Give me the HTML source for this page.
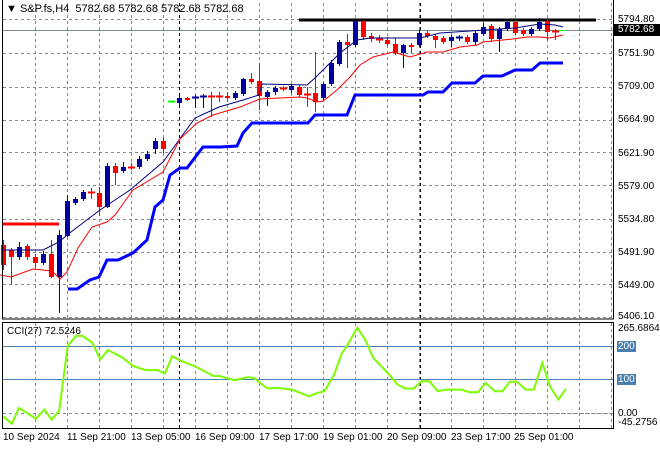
<!DOCTYPE html>
<html><head><meta charset="utf-8"><style>
body{margin:0;background:#fff;width:660px;height:450px;overflow:hidden;font-family:"Liberation Sans",sans-serif;}
svg{position:absolute;left:0;top:0}
.t{position:absolute;font-size:10px;color:#000;white-space:nowrap;line-height:11px}
</style></head><body>
<svg id="s" width="660" height="450" xmlns="http://www.w3.org/2000/svg"></svg>
<div class="t" style="left:6px;top:4px;font-size:11px">&#9660; S&amp;P.fs,H4&nbsp; 5782.68 5782.68 5782.68 5782.68</div>
<div class="t" style="left:618px;top:14px">5794.80</div>
<div class="t" style="left:613px;top:24px;background:#000;color:#fff;width:47px;padding-left:5px;height:12px">5782.68</div>
<div class="t" style="left:618px;top:48px">5751.90</div>
<div class="t" style="left:618px;top:81px">5709.00</div>
<div class="t" style="left:618px;top:114px">5664.90</div>
<div class="t" style="left:618px;top:148px">5621.90</div>
<div class="t" style="left:618px;top:181px">5579.00</div>
<div class="t" style="left:618px;top:214px">5534.80</div>
<div class="t" style="left:618px;top:247px">5491.90</div>
<div class="t" style="left:618px;top:280px">5449.00</div>
<div class="t" style="left:618px;top:311px">5406.10</div>
<div class="t" style="left:7px;top:326px">CCI(27) 72.5246</div>
<div class="t" style="left:618px;top:323px">265.6864</div>
<div class="t" style="left:617px;top:341px;background:#4a7fae;color:#fff;padding:0 1px">200</div>
<div class="t" style="left:617px;top:374px;background:#4a7fae;color:#fff;padding:0 1px">100</div>
<div class="t" style="left:618px;top:408px">0.00</div>
<div class="t" style="left:618px;top:417px">-45.2756</div>
<div class="t" style="left:3px;top:432px">10 Sep 2024</div>
<div class="t" style="left:67px;top:432px">11 Sep 21:00</div>
<div class="t" style="left:131px;top:432px">13 Sep 05:00</div>
<div class="t" style="left:195px;top:432px">16 Sep 09:00</div>
<div class="t" style="left:259px;top:432px">17 Sep 17:00</div>
<div class="t" style="left:323px;top:432px">19 Sep 01:00</div>
<div class="t" style="left:387px;top:432px">20 Sep 09:00</div>
<div class="t" style="left:451px;top:432px">23 Sep 17:00</div>
<div class="t" style="left:514px;top:432px">25 Sep 01:00</div>
<script>
var s=document.getElementById('s'),h='';
function L(x1,y1,x2,y2,c,w,d){h+='<line x1="'+x1+'" y1="'+y1+'" x2="'+x2+'" y2="'+y2+'" stroke="'+c+'" stroke-width="'+(w||1)+'"'+(d?' stroke-dasharray="'+d+'"':'')+'/>';}
function P(pts,c,w){h+='<polyline fill="none" stroke="'+c+'" stroke-width="'+w+'" points="'+pts.map(p=>p.join(',')).join(' ')+'"/>';}
var G='#7d8a95';
[19,53,87,120,152,185,219,252,284,317].forEach(y=>L(3,y+.5,614,y+.5,G,1,'3,3'));
for(var x=35;x<614;x+=32){L(x+.5,3,x+.5,319,G,1,'3,3');L(x+.5,323,x+.5,428,G,1,'3,3');}
L(413,413.5,614,413.5,G,1,'3,3');L(3,413.5,614,413.5,G,1,'3,3');
L(179.5,3,179.5,319,'#000',1,'3,3');L(179.5,323,179.5,428,'#000',1,'3,3');
L(420.5,3,420.5,319,'#000',1,'3,3');L(420.5,323,420.5,428,'#000',1,'3,3');
L(3,30.5,614,30.5,'#7d8a95',1);
L(299,20,596,20,'#000',3);
L(3,224,59,224,'#f00',3);
var C=[[245,265,240,270],[250,257,248,285],[257,247,242,260],[246,257,244,260],[257,263,254,268],[263,254,251,265],[254,277,240,278],[277,235,230,313],[236,201,195,237],[203,199,197,205],[199,192,190,201],[192,193,188,199],[193,207,187,216],[207,166,163,208],[166,173,163,185],[171,167,162,173],[167,167,163,170],[167,159,156,169],[159,154,151,161],[149,141,138,154],[141,149,138,153],
[101,101,101,101],[103,98,96,107],[98,100,97,101],[98,97,95,108],[97,96,94,108],[96,97,92,117],[96,97,92,102],[96,98,92,102],[98,93,91,100],[94,79,78,96],[79,82,73,84],[81,96,63,110],[97,92,90,106],[92,88,86,95],[88,89,86,91],[90,86,84,93],[87,95,85,97],[94,94,87,107],[93,102,52,112],[98,84,82,100],[84,63,60,86],[64,42,40,66],[42,45,34,68],[45,21,20,47],[21,37,20,40],[36,39,33,42],[39,40,35,43],[40,44,37,46],[44,53,38,55],[53,45,44,68],[45,47,43,53],[45,33,30,47],[33,36,31,38],[36,40,34,48],[38,42,36,44],[41,37,35,47],[38,37,35,41],[37,42,35,44],[42,33,31,45],[34,27,23,36],[26,39,24,41],[39,29,27,52],[29,22,19,31],[22,33,20,35],[30,34,28,36],[34,29,27,36],[29,22,18,31],[21,32,18,40],[31,31,29,40]];
C.forEach((c,i)=>{var x=3+8*i,o=c[0],cl=c[1],col=cl<o?'#0000a0':'#f00';if(i==21)col='#0f0';
L(x+.5,c[2],x+.5,c[3],col,1);var t=Math.min(o,cl),b=Math.max(o,cl);
if(b-t<2){L(x-3,t+.5,x+4,t+.5,col,2);}else h+='<rect x="'+(x-2)+'" y="'+t+'" width="5" height="'+(b-t)+'" fill="'+col+'"/>';});
L(560,30.5,566,30.5,'#0f0',1);
P([[3,250],[43,250],[59,242],[67,235],[100,210],[130,190],[163,162],[179,140],[195,118],[219,107],[243,100],[259,95],[262,84],[307,85],[315,78],[323,70],[340,53],[357,40],[370,38],[420,38],[440,33],[515,28],[540,24],[555,25],[563,27]],'#000080',1);
P([[0,275],[11,277],[33,269],[52,271],[60,279],[67,272],[78,248],[92,227],[107,222],[115,215],[133,190],[163,172],[180,139],[197,123],[213,115],[240,107],[260,99],[280,98],[300,97],[307,98],[317,102],[323,101],[337,90],[350,77],[360,65],[373,57],[393,52],[410,57],[427,52],[443,52],[460,47],[477,45],[483,42],[513,39],[527,37],[540,37],[550,38],[563,35]],'#f00',1);
P([[68,289],[77,289],[90,280],[99,277],[107,260],[118,260],[133,253],[147,240],[155,207],[163,200],[170,175],[180,168],[187,168],[203,147],[220,147],[237,146],[243,133],[252,123],[308,123],[315,115],[347,115],[355,95],[423,95],[428,92],[443,92],[452,83],[475,83],[483,76],[502,76],[515,70],[532,70],[540,63],[563,63]],'#0000ff',3);
L(3,346.5,614,346.5,'#4a7fae',1);L(3,379.5,614,379.5,'#4a7fae',1);
var cc=[[8,350],[28,372],[45,325],[85,357],[105,330],[122,360],[140,333],[160,140],[180,110],[195,110],[218,130],[237,180],[255,152],[290,175],[315,200],[345,212],[372,212],[390,222],[407,170],[425,183],[460,200],[505,230],[520,230],[555,242],[585,233],[600,235],[632,267],[655,265],[690,270],[730,290],[750,280],[767,275],[790,225],[808,162],[820,140],[845,85],[865,125],[882,175],[920,225],[940,255],[958,267],[978,267],[997,245],[1015,245],[1035,275],[1055,270],[1090,270],[1110,278],[1130,278],[1148,250],[1170,275],[1188,275],[1205,247],[1222,247],[1243,270],[1262,270],[1282,190],[1300,260],[1320,300],[1338,268]].map(p=>[(p[0]/2.364).toFixed(1),(413-(340-p[1])*0.335).toFixed(1)]);
P(cc,'#7cfc00',2);
h+='<rect x="2.5" y="-1" width="611" height="320" fill="none" stroke="#000"/>';
h+='<rect x="2.5" y="322.5" width="611" height="106" fill="none" stroke="#000"/>';
s.innerHTML=h;
</script>
</body></html>
